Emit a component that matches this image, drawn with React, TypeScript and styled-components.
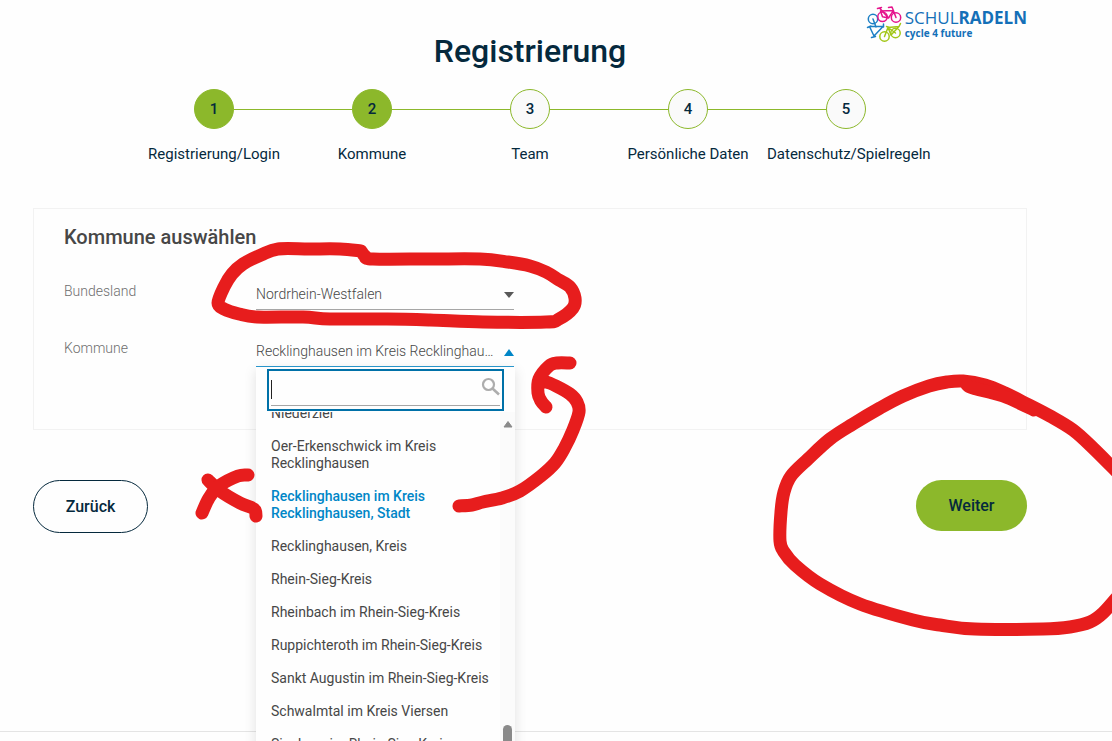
import React, { useState } from 'react';
import styled, { createGlobalStyle, css } from 'styled-components';

const color = {
  navy: '#05293d',
  green: '#8cb82b',
  text: '#474747',
  muted: '#6f6f6f',
  blue: '#0086c7',
  focus: '#0071a8',
  marker: '#e71d1d',
};

const GlobalStyle = createGlobalStyle`
  *, *::before, *::after { box-sizing: border-box; }
  body {
    margin: 0;
    background: #fefefe;
    color: ${color.text};
    font-family: Roboto, "Liberation Sans", sans-serif;
    font-size: 14px;
  }
  button, input, select { font: inherit; color: inherit; }
`;

const Page = styled.div`
  position: relative;
  display: flex;
  flex-direction: column;
  height: 100vh;
  overflow: hidden;
`;

const Main = styled.main`
  flex: 1;
  padding: 6px 85px 0 33px;
`;

const LogoBar = styled.header`
  display: flex;
  justify-content: flex-end;
  height: 27px;
`;

const Logo = styled.a`
  display: flex;
  gap: 3px;
  height: 36px;
  color: #1470b8;
  text-decoration: none;
  font-family: "Open Sans", "Noto Sans", sans-serif;
  white-space: nowrap;
`;

const LogoText = styled.span`
  display: flex;
  flex-direction: column;
  padding-top: 2px;
`;

const LogoName = styled.span`
  font-size: 17px;
  line-height: 20px;
  strong { font-weight: 700; }
`;

const LogoClaim = styled.span`
  font-size: 10px;
  line-height: 10px;
  font-weight: 700;
`;

const Title = styled.h1`
  margin: 0;
  color: ${color.navy};
  font-size: 32px;
  line-height: 36px;
  font-weight: 500;
  text-align: center;
`;

const Steps = styled.ol`
  display: flex;
  justify-content: center;
  margin: 20px 0 0;
  padding: 0;
  list-style: none;
`;

const Step = styled.li`
  display: flex;
  flex-direction: column;
  gap: 16px;
  width: 158px;
  color: ${color.navy};
`;

const StepTrack = styled.div`
  display: flex;
  align-items: center;
  width: 100%;
`;

const StepLine = styled.span<{ $hidden?: boolean }>`
  flex: 1;
  height: 1px;
  background: ${(p) => (p.$hidden ? 'transparent' : color.green)};
`;

const StepDot = styled.span<{ $active: boolean }>`
  display: flex;
  align-items: center;
  justify-content: center;
  width: 40px;
  height: 40px;
  border: 1px solid ${color.green};
  border-radius: 50%;
  background: ${(p) => (p.$active ? color.green : '#fafafa')};
  font-size: 15px;
  line-height: 18px;
  font-weight: 500;
`;

const StepLabel = styled.span`
  font-size: 15px;
  line-height: 18px;
  text-align: center;
  white-space: nowrap;
`;

const Card = styled.section`
  height: 222px;
  margin-top: 45px;
  padding: 16px 30px;
  border: 1px solid #f2f2f2;
`;

const CardTitle = styled.h2`
  margin: 0 0 28px;
  font-size: 20px;
  line-height: 24px;
  font-weight: 500;
`;

const Field = styled.div`
  display: grid;
  grid-template-columns: 192px 258px;
  align-items: start;
  height: 57px;
`;

const FieldLabel = styled.label`
  color: ${color.muted};
  line-height: 28px;
  font-weight: 300;
`;

const Control = styled.div`
  position: relative;
`;

const Arrow = styled.svg`
  position: absolute;
  top: 15px;
  right: 0;
  width: 10px;
  height: 7px;
  pointer-events: none;
`;

const boxStyle = css`
  display: block;
  width: 100%;
  height: 33px;
  margin: 0;
  padding: 2px 20px 0 0;
  border: 0;
  border-bottom: 1px solid #a6a6a6;
  border-radius: 0;
  background: transparent;
  color: #474747;
  font-weight: 300;
  text-align: left;
  outline: none;
`;

const Select = styled.select`
  ${boxStyle}
  appearance: none;
`;

const Trigger = styled.button`
  ${boxStyle}
  overflow: hidden;
  border-bottom-color: #2a9ad1;
  text-overflow: ellipsis;
  white-space: nowrap;
`;

const Menu = styled.div`
  position: absolute;
  top: 33px;
  left: 0;
  z-index: 1;
  width: 259px;
  padding-top: 2px;
  background: #fefefe;
  box-shadow: 0 3px 12px rgba(0, 0, 0, 0.12);
`;

const SearchBox = styled.div`
  position: relative;
  display: flex;
  width: 237px;
  height: 42px;
  margin-left: 11px;
  padding: 3px 2px;
  border: 2px solid ${color.focus};
  background: #fefefe;
`;

const SearchInput = styled.input`
  width: 100%;
  padding: 0 26px 0 0;
  border: 0;
  border-bottom: 1px solid #a6a6a6;
  background: transparent;
  outline: none;
`;

const SearchIcon = styled.svg`
  position: absolute;
  top: 6px;
  right: 1px;
  width: 20px;
  height: 20px;
`;

const Caret = styled.span`
  position: absolute;
  top: 9px;
  left: 2px;
  width: 1px;
  height: 19px;
  background: #222;
`;

const ListArea = styled.div`
  display: flex;
  height: 420px;
  margin-top: 1px;
  overflow: hidden;
`;

const Options = styled.ul`
  flex: 1;
  margin: -15px 0 0;
  padding: 0;
  list-style: none;
`;

const Option = styled.li<{ $selected: boolean }>`
  padding: 8px 10px 8px 15px;
  color: ${(p) => (p.$selected ? color.blue : color.text)};
  font-weight: ${(p) => (p.$selected ? 500 : 400)};
  line-height: 17px;
`;

const ScrollTrack = styled.div`
  display: flex;
  flex-direction: column;
  align-items: center;
  justify-content: space-between;
  width: 15px;
  padding: 8px 0 0;
  background: #fbfbfb;
`;

const ScrollThumb = styled.span`
  width: 9px;
  height: 107px;
  border-radius: 5px;
  background: #8a8a8a;
`;

const Actions = styled.div`
  display: flex;
  align-items: flex-start;
  justify-content: space-between;
  margin-top: 50px;
`;

const ActionButton = styled.button<{ $primary?: boolean }>`
  min-width: ${(p) => (p.$primary ? 111 : 115)}px;
  padding: 16px 30px;
  border: ${(p) => (p.$primary ? '0' : `1px solid ${color.navy}`)};
  border-radius: 27px;
  background: ${(p) => (p.$primary ? color.green : 'transparent')};
  color: ${color.navy};
  font-size: 16px;
  line-height: 19px;
  font-weight: 500;
  cursor: pointer;
`;

const Footer = styled.footer`
  height: 10px;
  border-top: 1px solid #e4e4e4;
`;

const Marker = styled.svg`
  position: absolute;
  top: 0;
  left: 0;
  z-index: 2;
  width: 1112px;
  height: 741px;
  pointer-events: none;
`;

type Point = [number, number];

// Catmull-Rom curve through the points of a pen stroke
const penPath = (pts: Point[]) => {
  let d = `M${pts[0][0]} ${pts[0][1]}`;
  for (let i = 0; i < pts.length - 1; i++) {
    const a = pts[Math.max(i - 1, 0)];
    const b = pts[i];
    const c = pts[i + 1];
    const e = pts[Math.min(i + 2, pts.length - 1)];
    d += `C${b[0] + (c[0] - a[0]) / 6} ${b[1] + (c[1] - a[1]) / 6} ${c[0] - (e[0] - b[0]) / 6} ${c[1] - (e[1] - b[1]) / 6} ${c[0]} ${c[1]}`;
  }
  return d;
};

const penStrokes: Point[][] = [
  [[361, 251], [340, 249], [309, 249], [278, 249], [261, 255], [243, 264], [232, 274], [224, 287], [218, 303], [224, 309], [239, 314], [257, 317], [303, 317], [330, 319], [387, 319], [430, 320], [483, 322], [546, 322], [559, 319], [573, 308], [575, 298], [570, 287], [559, 280], [546, 272], [530, 266], [508, 262], [480, 259], [430, 259], [373, 259], [365, 256], [361, 251]],
  [[459, 506], [472, 505], [483, 502], [502, 498], [520, 491], [541, 476], [555, 463], [564, 449], [573, 430], [579, 412], [577, 402], [570, 394], [556, 386], [546, 382], [541, 383]],
  [[570, 363], [557, 363], [549, 366], [539, 379], [538, 393], [541, 401], [546, 407]],
  [[208, 480], [220, 491], [240, 503], [254, 509], [256, 516]],
  [[248, 475], [238, 476], [219, 486], [209, 498], [202, 513]],
  [[1118, 473], [1093, 448], [1073, 430], [1050, 416], [1027, 404], [1005, 393], [985, 385], [963, 381], [947, 382], [929, 386], [903, 396], [880, 408], [853, 424], [830, 439], [808, 459], [791, 476], [784, 492], [781, 512], [780, 541], [784, 552], [795, 565], [820, 584], [860, 604], [913, 620], [940, 625], [975, 629], [1043, 629], [1070, 627], [1090, 622], [1103, 613], [1119, 595]],
  [[967, 385], [973, 388], [1003, 396], [1034, 410]],
];

const LogoMark = () => (
  <svg
    width="35"
    height="36"
    viewBox="0 0 35 36"
    overflow="visible"
    fill="none"
    strokeWidth="1.500"
    strokeLinecap="round"
    strokeLinejoin="round"
    aria-hidden="true"
  >
    <g stroke="#1c7fc4">
      <circle cx="6" cy="13" r="4.700" />
      <path d="M6 13 9 21M2.500 20.500 16 20.500 7 30zM16.500 18v3M.500 21.500l3.500-1.500M4.500 31.500l4-1" />
    </g>
    <g stroke="#a2c617">
      <circle cx="17.500" cy="30.500" r="4.700" />
      <circle cx="28.500" cy="27" r="4.700" />
      <path d="M17.500 30.500 21 21.500 28.500 27M21 21.500 32 20.500 24 29zM33.500 17.500l-1.500 3M19.500 20.500l3 1" />
    </g>
    <g stroke="#e5148c">
      <circle cx="15.500" cy="10.800" r="4.700" />
      <circle cx="29" cy="11.500" r="4.700" />
      <path d="M15.500 10.800 21.500 12 26.500 4.500 13.500 5zM12.500 2 21.500 12M10.500 2.500l4-1M21.500 1.500 25 1 29 11.500" />
    </g>
  </svg>
);

const steps = ['Registrierung/Login', 'Kommune', 'Team', 'Persönliche Daten', 'Datenschutz/Spielregeln'];

const communes = [
  'Niederzier',
  'Oer-Erkenschwick im Kreis Recklinghausen',
  'Recklinghausen im Kreis Recklinghausen, Stadt',
  'Recklinghausen, Kreis',
  'Rhein-Sieg-Kreis',
  'Rheinbach im Rhein-Sieg-Kreis',
  'Ruppichteroth im Rhein-Sieg-Kreis',
  'Sankt Augustin im Rhein-Sieg-Kreis',
  'Schwalmtal im Kreis Viersen',
  'Siegburg im Rhein-Sieg-Kreis',
];

export default function App() {
  const [commune, setCommune] = useState(communes[2]);
  const currentStep = 2;

  return (
    <>
      <GlobalStyle />
      <Page>
        <Main>
          <LogoBar>
            <Logo href="#" aria-label="Schulradeln">
              <LogoMark />
              <LogoText>
                <LogoName>SCHUL<strong>RADELN</strong></LogoName>
                <LogoClaim>cycle 4 future</LogoClaim>
              </LogoText>
            </Logo>
          </LogoBar>
          <Title>Registrierung</Title>
          <Steps>
            {steps.map((label, i) => (
              <Step key={label}>
                <StepTrack>
                  <StepLine $hidden={i === 0} />
                  <StepDot $active={i < currentStep}>{i + 1}</StepDot>
                  <StepLine $hidden={i === steps.length - 1} />
                </StepTrack>
                <StepLabel>{label}</StepLabel>
              </Step>
            ))}
          </Steps>

          <Card>
            <CardTitle>Kommune auswählen</CardTitle>
            <Field>
              <FieldLabel htmlFor="state">Bundesland</FieldLabel>
              <Control>
                <Select id="state" defaultValue="nrw">
                  <option value="nrw">Nordrhein-Westfalen</option>
                </Select>
                <Arrow viewBox="0 0 10 7"><path d="M0 0h10L5 6z" fill="#595959" /></Arrow>
              </Control>
            </Field>
            <Field>
              <FieldLabel htmlFor="commune">Kommune</FieldLabel>
              <Control>
                <Trigger id="commune" type="button" aria-haspopup="listbox" aria-expanded="true">
                  {commune}
                </Trigger>
                <Arrow viewBox="0 0 10 7"><path d="M0 7h10L5 0z" fill={color.blue} /></Arrow>
                <Menu>
                  <SearchBox>
                    <SearchInput type="text" aria-label="Kommune suchen" />
                    <Caret />
                    <SearchIcon viewBox="0 0 20 20" fill="none" stroke="#adadad">
                      <circle cx="7.500" cy="7.500" r="5.500" strokeWidth="2.200" />
                      <path d="m11.500 11.500 6.500 6" strokeWidth="2.600" />
                    </SearchIcon>
                  </SearchBox>
                  <ListArea>
                    <Options role="listbox" aria-label="Kommune">
                      {communes.map((name) => (
                        <Option
                          key={name}
                          role="option"
                          aria-selected={name === commune}
                          $selected={name === commune}
                          onClick={() => setCommune(name)}
                        >
                          {name}
                        </Option>
                      ))}
                    </Options>
                    <ScrollTrack>
                      <svg width="10" height="8" viewBox="0 0 10 8">
                        <path d="M5 1.500 9 7H1z" fill="#8a8a8a" stroke="#8a8a8a" strokeLinejoin="round" />
                      </svg>
                      <ScrollThumb />
                    </ScrollTrack>
                  </ListArea>
                </Menu>
              </Control>
            </Field>
          </Card>

          <Actions>
            <ActionButton type="button">Zurück</ActionButton>
            <ActionButton type="button" $primary>Weiter</ActionButton>
          </Actions>
        </Main>
        <Footer />
        <Marker
          viewBox="0 0 1112 741"
          fill="none"
          stroke={color.marker}
          strokeWidth="13"
          strokeLinecap="round"
          strokeLinejoin="round"
          aria-hidden="true"
        >
          {penStrokes.map((pts, i) => (
            <path key={i} d={penPath(pts)} />
          ))}
        </Marker>
      </Page>
    </>
  );
}
